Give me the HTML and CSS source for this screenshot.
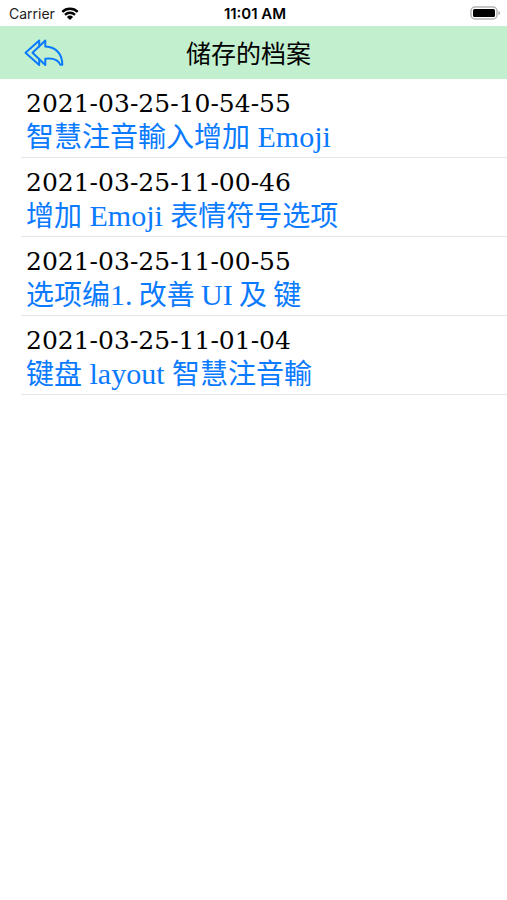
FILE: index.html
```html
<!DOCTYPE html>
<html lang="zh-Hans">
<head>
    <meta charset="UTF-8">
    <meta name="viewport" content="width=device-width, initial-scale=1.0">
    <title>储存的档案</title>
    <link rel="stylesheet" href="styles.css">
</head>
<body>
    <div class="status-bar">
        <div class="carrier">
            <span>Carrier</span>
            <svg class="wifi" viewBox="0 0 18 13" width="18" height="13" aria-hidden="true">
                <path d="M1.3 4.9a11 11 0 0 1 15.4 0M4 7.8a7.2 7.2 0 0 1 10 0" fill="none" stroke="#000" stroke-width="2.4"/>
                <path d="M9 13 5.9 9.9a4.4 4.4 0 0 1 6.2 0z"/>
            </svg>
        </div>
        <div class="time">11:01 AM</div>
        <svg class="battery" viewBox="0 0 31 14" width="31" height="14" aria-hidden="true">
            <rect x="1" y="1" width="26" height="12" rx="4" fill="#fff" stroke="#b4b4b4" stroke-width="1.5"/>
            <rect x="3" y="3" width="22" height="8" rx="1.5"/>
            <path d="M28.3 4.8q2 .7 2 2.2t-2 2.2z" fill="#b4b4b4"/>
        </svg>
    </div>

    <header class="nav-bar">
        <button class="back-button" type="button" aria-label="返回">
            <svg viewBox="0 0 40 28" width="40" height="28" fill="none" stroke="#0a7aff" stroke-width="2" stroke-linejoin="round" stroke-linecap="round" aria-hidden="true">
                <path d="M21.3 1.5 8.5 13.8 21.3 26v-6.2c7-.8 12.6.2 15.2 6h1.8C38.4 15.6 32.5 8 21.3 7.6z"/>
                <path d="M15.2 7.4V1.5L1.5 13.8 15.2 26v-5.8"/>
            </svg>
        </button>
        <h1 class="nav-title">储存的档案</h1>
    </header>

    <ul class="file-list">
        <li class="file">
            <div class="file-date">2021-03-25-10-54-55</div>
            <a class="file-name" href="#">智慧注音輸入增加<span class="latin"> Emoji</span></a>
        </li>
        <li class="file">
            <div class="file-date">2021-03-25-11-00-46</div>
            <a class="file-name" href="#">增加<span class="latin"> Emoji </span>表情符号选项</a>
        </li>
        <li class="file">
            <div class="file-date">2021-03-25-11-00-55</div>
            <a class="file-name" href="#">选项编<span class="latin">1.</span> 改善 <span class="latin">UI</span> 及 键</a>
        </li>
        <li class="file">
            <div class="file-date">2021-03-25-11-01-04</div>
            <a class="file-name" href="#">键盘<span class="latin"> layout </span>智慧注音輸</a>
        </li>
    </ul>
</body>
</html>
```
FILE: styles.css
```css
body {
    margin: 0;
    background: #fff;
    color: #000;
    font-family: Inter, "Noto Sans CJK SC", sans-serif;
}

.status-bar {
    display: grid;
    grid-template-columns: 1fr auto 1fr;
    align-items: center;
    height: 26px;
    padding: 0 6px 0 9px;
    font-size: 14px;
}

.carrier {
    display: flex;
    align-items: center;
    gap: 6px;
    color: #222;
}

.time {
    font-size: 15px;
    font-weight: 600;
}

.battery {
    justify-self: end;
}

.nav-bar {
    display: grid;
    grid-template-columns: 1fr auto 1fr;
    align-items: center;
    height: 53px;
    padding: 0 24px;
    box-sizing: border-box;
    background: #c2efce;
}

.back-button {
    display: flex;
    justify-self: start;
    padding: 0;
    border: none;
    background: none;
    cursor: pointer;
}

.nav-title {
    grid-column: 2;
    margin: 0 10px 2px 0;
    font-family: "Noto Sans CJK SC", sans-serif;
    font-size: 25px;
    font-weight: 400;
    line-height: 50px;
}

.file-list {
    margin: 0;
    padding: 0 0 0 21px;
    list-style: none;
}

.file {
    padding: 10px 0 4px 5px;
    border-bottom: 1px solid #e6e6e8;
    white-space: nowrap;
}

.file-date {
    font-family: "DejaVu Serif", serif;
    font-size: 25px;
    line-height: 30px;
}

.file-name {
    display: block;
    color: #0a7aff;
    font-family: "Noto Sans CJK SC", sans-serif;
    font-size: 28px;
    line-height: 32px;
    text-decoration: none;
}

.latin {
    font-family: "Liberation Serif", serif;
    font-size: 30px;
}
```
